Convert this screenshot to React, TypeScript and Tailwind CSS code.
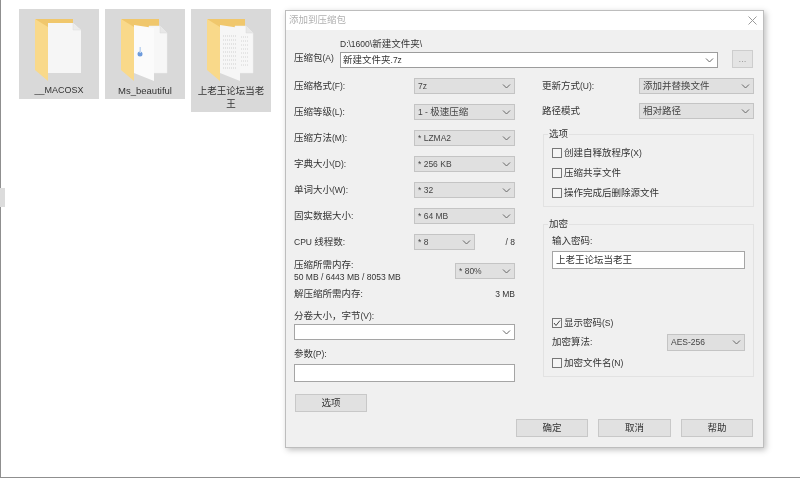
// latin runs are set smaller, the original UI font is narrower than Arial
const T = ({ text }: { text: string }) => (
  <>
    {text.split(/([\x00-\x7f]+)/).map((part, i) =>
      i % 2 === 1 ? (
        <span key={i} className="text-[8.5px]">
          {part}
        </span>
      ) : (
        part
      ),
    )}
  </>
);

const Chevron = () => (
  <svg width="9" height="5" viewBox="0 0 9 5" fill="none" stroke="#666" strokeWidth="1" className="shrink-0">
    <path d="M1 0.5 L4.5 4 L8 0.5" />
  </svg>
);

const Select = ({ value, className = "" }: { value: string; className?: string }) => (
  <div className={`flex items-center justify-between h-[16px] bg-[#e0e0e0] border border-[#c4c4c4] pl-[3px] pr-[3px] text-[#444] ${className}`}>
    <span>
      <T text={value} />
    </span>
    <Chevron />
  </div>
);

const Row = ({ label, value }: { label: string; value: string }) => (
  <div className="flex items-center justify-between h-[16px] mb-[10px]">
    <span>
      <T text={label} />
    </span>
    <Select value={value} className="w-[101px]" />
  </div>
);

const Check = ({ label, checked = false }: { label: string; checked?: boolean }) => (
  <div className="flex items-center gap-[2px] h-[12px]">
    <div className="w-[10px] h-[10px] border border-[#777] bg-[#f5f5f5] flex items-center justify-center">
      {checked && (
        <svg width="8" height="8" viewBox="0 0 8 8" fill="none" stroke="#444" strokeWidth="1">
          <path d="M1 4 L3 6.5 L7 1.5" />
        </svg>
      )}
    </div>
    <span>
      <T text={label} />
    </span>
  </div>
);

const Button = ({ label, className = "" }: { label: string; className?: string }) => (
  <div className={`flex items-center justify-center h-[18px] bg-[#e1e1e1] border border-[#c8c8c8] text-[#333] ${className}`}>
    {label}
  </div>
);

const Page = ({ x, w, lines = false }: { x: number; w: number; lines?: boolean }) => (
  <g>
    <path d={`M${x} 17 L${x + w - 7} 17 L${x + w} 24 L${x + w} 64 L${x} 64 Z`} fill="#f7f7f7" stroke="#ececec" strokeWidth="0.5" />
    <path d={`M${x + w - 7} 17 L${x + w - 7} 24 L${x + w} 24`} fill="#e8e8e8" stroke="#d8d8d8" strokeWidth="0.5" />
    {lines && (
      <path
        d={`M${x + 4} 28 H${x + w - 4} M${x + 4} 32 H${x + w - 4} M${x + 4} 36 H${x + w - 4} M${x + 4} 40 H${x + w - 4} M${x + 4} 44 H${x + w - 4} M${x + 4} 48 H${x + w - 4} M${x + 4} 52 H${x + w - 4} M${x + 4} 56 H${x + w - 4}`}
        stroke="#d4d4d4"
        strokeWidth="1"
        strokeDasharray="1 1"
      />
    )}
  </g>
);

const Folder = ({ kind }: { kind: number }) => (
  <svg width="80" height="75" viewBox="0 0 80 75">
    <path d="M16 10 L54 10 L54 20 L30 22 Z" fill="#f0c76c" />
    {kind === 0 && (
      <g>
        <path d="M29 14 L54 14 L62 21 L62 64 L29 64 Z" fill="#f6f6f6" />
        <path d="M54 14 L54 21 L62 21" fill="#ececec" stroke="#dcdcdc" strokeWidth="0.5" />
      </g>
    )}
    {kind === 1 && (
      <g>
        <Page x={44} w={18} />
        <path d="M29 16 L49 19 L49 72 L29 64 Z" fill="#fbfbfb" />
        <circle cx="35" cy="45" r="2.5" fill="#6d9bdc" />
        <rect x="34.5" y="38" width="1.5" height="6" fill="#c2d6f0" />
      </g>
    )}
    {kind === 2 && (
      <g>
        <Page x={44} w={18} lines />
        <path d="M29 16 L49 19 L49 72 L29 64 Z" fill="#f6f6f6" />
        <path
          d="M32 27 H46 M32 31 H46 M32 35 H46 M32 39 H46 M32 43 H46 M32 47 H46 M32 51 H46 M32 55 H46 M32 59 H46"
          stroke="#d0d0d0"
          strokeWidth="1"
          strokeDasharray="1 1"
        />
      </g>
    )}
    <path d="M16 10 L29 18 L29 72 L16 61 Z" fill="#f9d98a" />
  </svg>
);

const FolderTile = ({ kind, name, small = false }: { kind: number; name: string; small?: boolean }) => (
  <div className="w-[80px] bg-[#d9d9d9] pb-[2px]">
    <div className="h-[75px] overflow-hidden">
      <Folder kind={kind} />
    </div>
    <div className={`text-center leading-[13px] px-[6px] text-[#333] break-all ${small ? "text-[9px]" : ""}`}>{name}</div>
  </div>
);

export default function App() {
  return (
    <div
      className="relative w-[800px] h-[479px] overflow-hidden bg-white text-[9.5px] text-[#333] blur-[0.5px]"
      style={{ fontFamily: '"Liberation Sans", "Noto Sans CJK SC", sans-serif' }}
    >
      <div className="h-[478px] border-l border-b border-[#8f8f8f]">
        <div className="flex gap-[6px] pl-[18px] pt-[9px] items-start">
          <FolderTile kind={0} name="__MACOSX" small />
          <FolderTile kind={1} name="Ms_beautiful" />
          <FolderTile kind={2} name="上老王论坛当老王" />
        </div>
      </div>
      <div className="absolute left-0 top-[188px] w-[5px] h-[19px] bg-[#dcdcdc]" />

      {/* dialog */}
      <div className="absolute left-[285px] top-[10px] w-[479px] h-[438px] border border-[#bdbdbd] bg-[#f0f0f0] shadow-[2px_2px_6px_rgba(0,0,0,0.25)]">
        <div className="flex items-center justify-between h-[19px] bg-white pl-[3px] pr-[6px] text-[#b0b0b0]">
          <span>添加到压缩包</span>
          <svg width="9" height="9" viewBox="0 0 9 9" stroke="#9a9a9a" strokeWidth="1">
            <path d="M0.5 0.5 L8.5 8.5 M8.5 0.5 L0.5 8.5" />
          </svg>
        </div>

        <div className="pl-[8px] pr-[9px]">
          {/* archive path */}
          <div className="flex items-end h-[38px]">
            <span className="w-[46px] mb-[3px]">
              <T text="压缩包(A)" />
            </span>
            <div className="w-[378px]">
              <div className="leading-[12px] mb-[2px]">
                <T text="D:\1600\" />
                新建文件夹
                <T text="\" />
              </div>
              <div className="flex items-center justify-between h-[16px] bg-white border border-[#9c9c9c] pl-[2px] pr-[3px]">
                <span>
                  <T text="新建文件夹.7z" />
                </span>
                <Chevron />
              </div>
            </div>
            <div className="ml-[14px] w-[21px] h-[18px] bg-[#e4e4e4] border border-[#cdcdcd] flex items-center justify-center text-[#999]">
              ...
            </div>
          </div>

          <div className="flex mt-[10px] gap-[26px]">
            {/* left column */}
            <div className="w-[221px]">
              <Row label="压缩格式(F):" value="7z" />
              <Row label="压缩等级(L):" value="1 - 极速压缩" />
              <Row label="压缩方法(M):" value="* LZMA2" />
              <Row label="字典大小(D):" value="* 256 KB" />
              <Row label="单词大小(W):" value="* 32" />
              <Row label="固实数据大小:" value="* 64 MB" />
              <div className="flex items-center h-[16px]">
                <span className="w-[120px]">
                  <T text="CPU 线程数:" />
                </span>
                <Select value="* 8" className="w-[61px]" />
                <span className="ml-auto text-[8.5px]">/ 8</span>
              </div>
              <div className="flex items-center justify-between mt-[9px] h-[24px]">
                <div className="leading-[12px]">
                  <div>
                    <T text="压缩所需内存:" />
                  </div>
                  <div className="text-[8.5px]">50 MB / 6443 MB / 8053 MB</div>
                </div>
                <Select value="* 80%" className="w-[60px]" />
              </div>
              <div className="flex justify-between mt-[5px] leading-[12px]">
                <span>
                  <T text="解压缩所需内存:" />
                </span>
                <span className="text-[8.5px]">3 MB</span>
              </div>
              <div className="mt-[10px] leading-[12px]">
                <T text="分卷大小，字节(V):" />
              </div>
              <div className="flex items-center justify-end h-[16px] mt-[2px] bg-white border border-[#a5a5a5] pr-[3px]">
                <Chevron />
              </div>
              <div className="mt-[8px] leading-[12px]">
                <T text="参数(P):" />
              </div>
              <div className="h-[18px] mt-[4px] bg-white border border-[#a5a5a5]" />
              <Button label="选项" className="w-[72px] mt-[12px] ml-[1px]" />
            </div>

            {/* right column */}
            <div className="w-[213px]">
              <div className="flex items-center justify-between h-[16px] mb-[9px] pl-[1px]">
                <span>
                  <T text="更新方式(U):" />
                </span>
                <Select value="添加并替换文件" className="w-[115px]" />
              </div>
              <div className="flex items-center justify-between h-[16px] pl-[1px]">
                <span>路径模式</span>
                <Select value="相对路径" className="w-[115px]" />
              </div>

              <fieldset className="mt-[9px] ml-[2px] h-[79px] border border-[#e2e2e2] pl-[8px]">
                <legend className="-ml-[4px] px-[1px] leading-[12px]">选项</legend>
                <div className="flex flex-col gap-[8px] mt-[7px]">
                  <Check label="创建自释放程序(X)" />
                  <Check label="压缩共享文件" />
                  <Check label="操作完成后删除源文件" />
                </div>
              </fieldset>

              <fieldset className="mt-[11px] ml-[2px] h-[159px] border border-[#e2e2e2] pl-[8px] pr-[8px]">
                <legend className="-ml-[4px] px-[1px] leading-[12px]">加密</legend>
                <div className="leading-[12px] mt-[5px]">
                  <T text="输入密码:" />
                </div>
                <div className="flex items-center h-[18px] mt-[4px] bg-white border border-[#a5a5a5] pl-[3px]">
                  上老王论坛当老王
                </div>
                <div className="mt-[48px]">
                  <Check label="显示密码(S)" checked />
                </div>
                <div className="flex items-center justify-between h-[17px] mt-[5px]">
                  <span>
                    <T text="加密算法:" />
                  </span>
                  <Select value="AES-256" className="w-[78px] h-[17px]" />
                </div>
                <div className="mt-[6px]">
                  <Check label="加密文件名(N)" />
                </div>
              </fieldset>
            </div>
          </div>

          <div className="flex justify-end gap-[10px] mt-[7px] pr-[1px]">
            <Button label="确定" className="w-[72px]" />
            <Button label="取消" className="w-[73px]" />
            <Button label="帮助" className="w-[72px]" />
          </div>
        </div>
      </div>
    </div>
  );
}
